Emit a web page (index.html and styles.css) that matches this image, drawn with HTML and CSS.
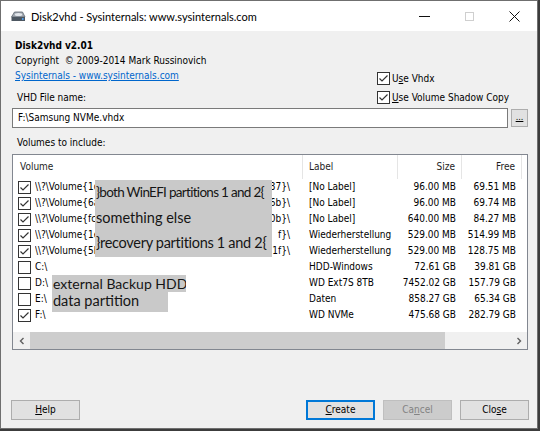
FILE: index.html
```html
<!DOCTYPE html>
<html>
<head>
<meta charset="utf-8">
<title>Disk2vhd</title>
<link rel="stylesheet" href="styles.css">
</head>
<body>
<div class="window">
  <div class="titlebar">
    <svg class="app-icon" width="16" height="16" viewBox="0 0 16 16">
      <path d="M1.5 9 L4.5 4 H12.5 L15 9 Z" fill="#a4abb3" stroke="#5d6670" stroke-width="0.8"/>
      <rect x="1.5" y="9" width="13.5" height="4" fill="#4d5761"/>
      <ellipse cx="8.5" cy="6.6" rx="3.6" ry="1.5" fill="#e3e7ec"/>
      <circle cx="12.8" cy="11" r="0.9" fill="#4fa8ff"/>
    </svg>
    <span class="title">Disk2vhd - Sysinternals: www.sysinternals.com</span>
    <div class="caption">
      <span class="cap"><svg width="11" height="11" viewBox="0 0 11 11"><path d="M0 5.5 H11" stroke="#111" stroke-width="1"/></svg></span>
      <span class="cap"><svg width="11" height="11" viewBox="0 0 11 11"><rect x="1.5" y="1.5" width="8" height="8" fill="none" stroke="#cfcfcf" stroke-width="1"/></svg></span>
      <span class="cap"><svg width="11" height="11" viewBox="0 0 11 11"><path d="M0.5 0.5 L10.5 10.5 M10.5 0.5 L0.5 10.5" stroke="#111" stroke-width="1"/></svg></span>
    </div>
  </div>

  <div class="dialog">
    <div class="top">
      <div class="info">
        <div class="line product">Disk2vhd v2.01</div>
        <div class="line">Copyright &nbsp;© 2009-2014 Mark Russinovich</div>
        <div class="line"><span class="link">Sysinternals - www.sysinternals.com</span></div>
        <div class="line label vhd">VHD File name:</div>
      </div>
      <div class="options">
        <div class="check"><span class="box on"></span><span>U<u>s</u>e Vhdx</span></div>
        <div class="check"><span class="box on"></span><span><u>U</u>se Volume Shadow Copy</span></div>
      </div>
    </div>

    <div class="file-row">
      <div class="input">F:\Samsung NVMe.vhdx</div>
      <div class="browse"><u>...</u></div>
    </div>

    <div class="line label volumes">Volumes to include:</div>

    <div class="listview">
      <div class="lv-header">
        <div class="c-vol h">Volume</div>
        <div class="c-label h">Label</div>
        <div class="c-size h">Size</div>
        <div class="c-free h">Free</div>
      </div>
      <div class="lv-rows">
        <div class="row"><div class="c-vol"><span class="box on"></span><span class="vtext">\\?\Volume{1d4e2b7a-0c31-4f2e-9a65-3e2f8c9b1f</span><span class="vtail">37}\</span></div><div class="c-label">[No Label]</div><div class="c-size">96.00 MB</div><div class="c-free">69.51 MB</div></div>
        <div class="row"><div class="c-vol"><span class="box on"></span><span class="vtext">\\?\Volume{6a91c0e4-27b3-4d18-8f02-7c5d3a41e</span><span class="vtail">6b}\</span></div><div class="c-label">[No Label]</div><div class="c-size">96.00 MB</div><div class="c-free">69.74 MB</div></div>
        <div class="row"><div class="c-vol"><span class="box on"></span><span class="vtext">\\?\Volume{fc3b8e52-91d0-4a7c-b6e3-25f0d9c4a</span><span class="vtail">0b}\</span></div><div class="c-label">[No Label]</div><div class="c-size">640.00 MB</div><div class="c-free">84.27 MB</div></div>
        <div class="row"><div class="c-vol"><span class="box on"></span><span class="vtext">\\?\Volume{1e8f4c2d-6b07-4a93-a1d5-9c3e7b02f4</span><span class="vtail">f}\</span></div><div class="c-label">Wiederherstellung</div><div class="c-size">529.00 MB</div><div class="c-free">514.99 MB</div></div>
        <div class="row"><div class="c-vol"><span class="box on"></span><span class="vtext">\\?\Volume{5b2a7d91-e4c6-4f08-93b1-0d6f2e8c5</span><span class="vtail">1f}\</span></div><div class="c-label">Wiederherstellung</div><div class="c-size">529.00 MB</div><div class="c-free">128.75 MB</div></div>
        <div class="row"><div class="c-vol"><span class="box"></span><span class="vtext">C:\</span></div><div class="c-label">HDD-Windows</div><div class="c-size">72.61 GB</div><div class="c-free">39.81 GB</div></div>
        <div class="row"><div class="c-vol"><span class="box"></span><span class="vtext">D:\</span></div><div class="c-label">WD Ext7S 8TB</div><div class="c-size">7452.02 GB</div><div class="c-free">157.79 GB</div></div>
        <div class="row"><div class="c-vol"><span class="box"></span><span class="vtext">E:\</span></div><div class="c-label">Daten</div><div class="c-size">858.27 GB</div><div class="c-free">65.34 GB</div></div>
        <div class="row"><div class="c-vol"><span class="box on"></span><span class="vtext">F:\</span></div><div class="c-label">WD NVMe</div><div class="c-size">475.68 GB</div><div class="c-free">282.79 GB</div></div>
      </div>
      <div class="lv-spacer"></div>
      <div class="hscroll">
        <div class="arrow"><svg width="8" height="8" viewBox="0 0 8 8"><path d="M5.5 1 L2.5 4 L5.5 7" fill="none" stroke="#606060" stroke-width="1.4"/></svg></div>
        <div class="track"><div class="thumb"></div></div>
        <div class="arrow"><svg width="8" height="8" viewBox="0 0 8 8"><path d="M2.5 1 L5.5 4 L2.5 7" fill="none" stroke="#606060" stroke-width="1.4"/></svg></div>
      </div>

      <div class="note note-efi">
        <div class="n1">}both WinEFI partitions 1 and 2{</div>
        <div class="n2">something else</div>
        <div class="n3">}recovery partitions 1 and 2{</div>
      </div>
      <div class="note note-backup">external Backup HDD</div>
      <div class="note note-data">data partition</div>
    </div>

    <div class="buttons">
      <div class="btn help"><u>H</u>elp</div>
      <div class="btn-group">
        <div class="btn default"><u>C</u>reate</div>
        <div class="btn disabled">Ca<u>n</u>cel</div>
        <div class="btn">Clo<u>s</u>e</div>
      </div>
    </div>
  </div>
</div>
</body>
</html>
```

FILE: styles.css
```css
* { box-sizing: border-box; }

html, body {
  margin: 0;
  padding: 0;
}

body {
  width: 540px;
  height: 431px;
  overflow: hidden;
  background: #3c3c3c;
  font-family: "DejaVu Sans Condensed", "DejaVu Sans", "Liberation Sans", sans-serif;
  font-size: 10px;
  color: #000;
}

.window {
  width: 538px;
  height: 429px;
  border: 1px solid #6f6f6f;
  background: #f0f0f0;
  display: flex;
  flex-direction: column;
}

/* title bar */
.titlebar {
  height: 30px;
  flex: 0 0 30px;
  background: #fff;
  display: flex;
  align-items: center;
  padding-left: 9px;
}

.app-icon { flex: 0 0 16px; }

.title {
  margin-left: 5px;
  font-family: "Lato", "Open Sans", sans-serif;
  font-size: 11px;
  color: #000;
  flex: 1;
}

.caption {
  display: flex;
  height: 30px;
}

.cap {
  width: 45px;
  height: 30px;
  display: flex;
  align-items: center;
  justify-content: center;
}

/* dialog body */
.dialog {
  flex: 1;
  display: flex;
  flex-direction: column;
  padding: 7px 9px 0 11px;
}

.line {
  line-height: 15px;
  height: 15px;
  white-space: nowrap;
}

.info .line { padding-left: 3px; }

.product { font-weight: bold; padding-left: 4px; }

.link {
  color: #0066cc;
  text-decoration: underline;
}

.top {
  display: grid;
  grid-template-columns: 1fr 151px;
}

.info .vhd {
  margin-top: 7px;
  padding-left: 5px;
}

.options {
  margin-top: 31px;
}

.check {
  height: 19px;
  display: flex;
  align-items: center;
  gap: 2px;
  white-space: nowrap;
}

.box {
  display: inline-block;
  width: 13px;
  height: 13px;
  flex: 0 0 13px;
  border: 1px solid #333;
  background: #fff;
}

.box.on {
  background: #fff url("data:image/svg+xml;utf8,<svg xmlns='http://www.w3.org/2000/svg' width='11' height='11' viewBox='0 0 11 11'><path d='M1.5 5.5 L4 8 L9.5 2.5' fill='none' stroke='%23333' stroke-width='1.2'/></svg>") center / 11px 11px no-repeat;
}

/* file row */
.file-row {
  margin-top: 1px;
  display: flex;
  gap: 3px;
}

.input {
  flex: 1;
  height: 20px;
  border: 1px solid #7a7a7a;
  background: #fff;
  padding-left: 5px;
  line-height: 18px;
}

.browse {
  width: 17px;
  height: 18px;
  margin-top: 1px;
  border: 1px solid #adadad;
  background: #e1e1e1;
  text-align: center;
  line-height: 14px;
  font-size: 9px;
}

.volumes {
  margin-top: 7px;
  padding-left: 5px;
}

/* list view */
.listview {
  margin-top: 4px;
  height: 196px;
  border: 1px solid #828790;
  background: #fff;
  display: flex;
  flex-direction: column;
  position: relative;
  overflow: hidden;
}

.lv-header {
  height: 24px;
  flex: 0 0 24px;
  display: flex;
  align-items: center;
}

.lv-header .h {
  height: 24px;
  line-height: 24px;
  border-right: 1px solid #e5e5e5;
  color: #1e1e1e;
}

.lv-header .c-vol { padding-left: 7px; }

.row {
  height: 16px;
  line-height: 16px;
  display: flex;
  white-space: nowrap;
}

.c-vol {
  width: 290px;
  flex: 0 0 290px;
  display: flex;
  align-items: center;
  overflow: hidden;
}

.row .c-vol {
  padding-left: 5px;
  padding-right: 13px;
}

.row .box { margin-right: 4px; }

.vtext {
  flex: 1;
  overflow: hidden;
  white-space: nowrap;
}

.vtail { flex: 0 0 auto; }

.c-label {
  width: 95px;
  flex: 0 0 95px;
  padding-left: 6px;
  overflow: hidden;
}

.c-size {
  width: 64px;
  flex: 0 0 64px;
  text-align: right;
  padding-right: 6px;
}

.c-free {
  width: 60px;
  flex: 0 0 60px;
  text-align: right;
  padding-right: 6px;
}

.lv-spacer { flex: 1; }

.hscroll {
  height: 17px;
  flex: 0 0 17px;
  display: flex;
  background: #f0f0f0;
}

.arrow {
  width: 17px;
  display: flex;
  align-items: center;
  justify-content: center;
}

.track {
  flex: 1;
  display: flex;
  align-items: stretch;
}

.thumb {
  width: 415px;
  background: #cdcdcd;
}

/* redaction notes */
.note {
  position: absolute;
  background: #c9c9c9;
  color: #151515;
  font-family: "Lato", "Open Sans", sans-serif;
  font-size: 14.5px;
  white-space: nowrap;
  overflow: hidden;
}

.note-efi {
  left: 82px;
  top: 25px;
  width: 177px;
  height: 77px;
  line-height: 25px;
  padding-left: 1px;
}

.note-efi .n1 {
  font-size: 13.5px;
  letter-spacing: -0.7px;
}

.note-efi .n3 {
  letter-spacing: -0.3px;
}

.note-backup {
  left: 39px;
  top: 120px;
  width: 134px;
  height: 17px;
  line-height: 17px;
  padding-left: 1px;
  font-size: 14px;
}

.note-data {
  left: 39px;
  top: 136px;
  width: 116px;
  height: 21px;
  line-height: 19px;
  padding-left: 1px;
}

/* buttons */
.buttons {
  margin-top: 50px;
  display: flex;
  justify-content: space-between;
}

.btn-group {
  display: flex;
  gap: 8px;
  margin-right: -1px;
}

.btn {
  width: 69px;
  height: 20px;
  border: 1px solid #adadad;
  background: #e1e1e1;
  text-align: center;
  line-height: 18px;
}

.help { margin-left: -1px; }

.btn.default {
  border: 2px solid #0078d7;
  line-height: 16px;
}

.btn.disabled {
  background: #cccccc;
  border-color: #bfbfbf;
  color: #838383;
}
```
